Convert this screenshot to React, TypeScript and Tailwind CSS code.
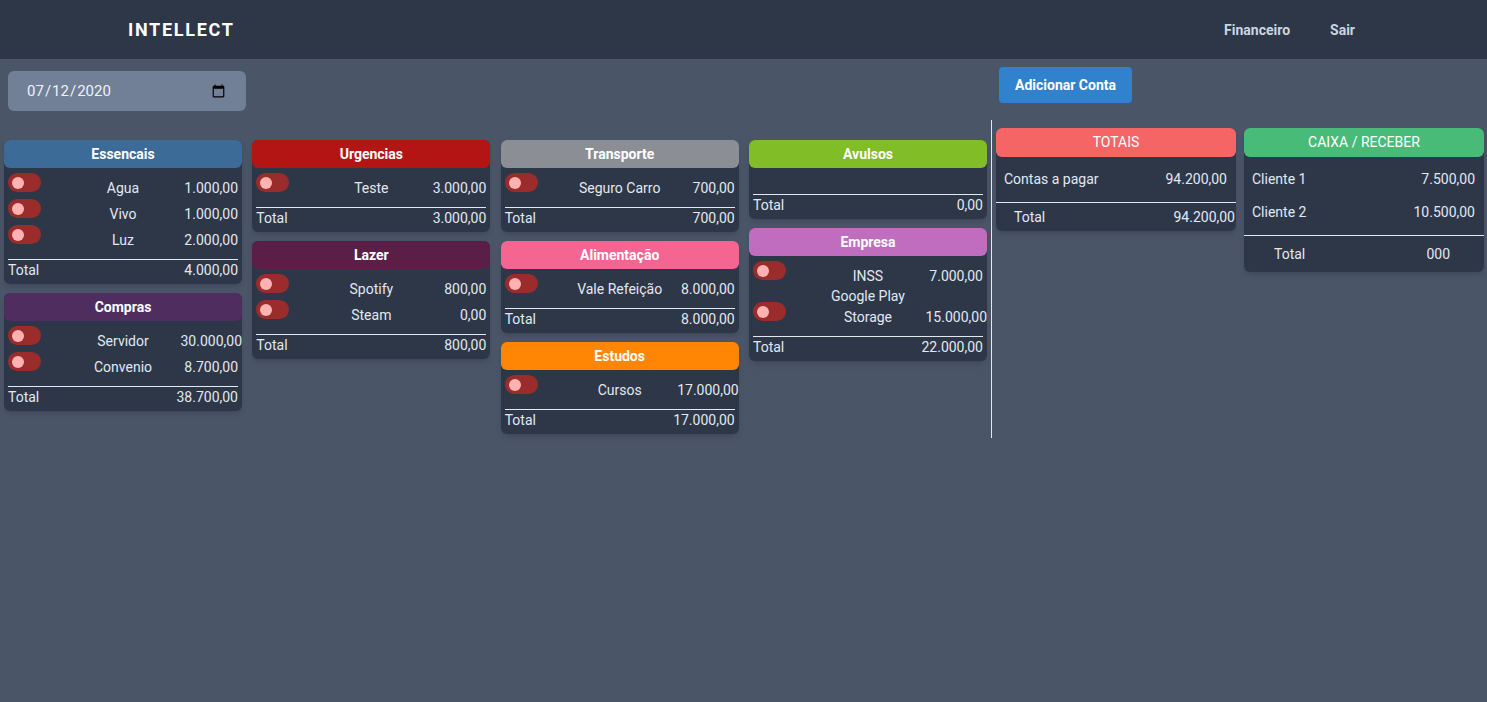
import React from 'react';

type Item = { name: string; value: string };
type Category = { title: string; headerClass: string; items: Item[]; total: string };

const columns: Category[][] = [
  [
    {
      title: 'Essencais',
      headerClass: 'bg-[#3b6b96]',
      items: [
        { name: 'Agua', value: '1.000,00' },
        { name: 'Vivo', value: '1.000,00' },
        { name: 'Luz', value: '2.000,00' },
      ],
      total: '4.000,00',
    },
    {
      title: 'Compras',
      headerClass: 'bg-[#4f2d5f]',
      items: [
        { name: 'Servidor', value: '30.000,00' },
        { name: 'Convenio', value: '8.700,00' },
      ],
      total: '38.700,00',
    },
  ],
  [
    {
      title: 'Urgencias',
      headerClass: 'bg-[#b31515]',
      items: [{ name: 'Teste', value: '3.000,00' }],
      total: '3.000,00',
    },
    {
      title: 'Lazer',
      headerClass: 'bg-[#5b1f47]',
      items: [
        { name: 'Spotify', value: '800,00' },
        { name: 'Steam', value: '0,00' },
      ],
      total: '800,00',
    },
  ],
  [
    {
      title: 'Transporte',
      headerClass: 'bg-[#8b8f95]',
      items: [{ name: 'Seguro Carro', value: '700,00' }],
      total: '700,00',
    },
    {
      title: 'Alimentação',
      headerClass: 'bg-[#f56592]',
      items: [{ name: 'Vale Refeição', value: '8.000,00' }],
      total: '8.000,00',
    },
    {
      title: 'Estudos',
      headerClass: 'bg-[#ff8605]',
      items: [{ name: 'Cursos', value: '17.000,00' }],
      total: '17.000,00',
    },
  ],
  [
    {
      title: 'Avulsos',
      headerClass: 'bg-[#80bd26]',
      items: [],
      total: '0,00',
    },
    {
      title: 'Empresa',
      headerClass: 'bg-[#c06cbf]',
      items: [
        { name: 'INSS', value: '7.000,00' },
        { name: 'Google Play Storage', value: '15.000,00' },
      ],
      total: '22.000,00',
    },
  ],
];

const Toggle: React.FC = () => (
  <span className="flex h-[19px] w-[33px] items-center rounded-full bg-[#9b2c2c] pl-1">
    <span className="h-3 w-3 rounded-full bg-[#feb2b2]" />
  </span>
);

const CategoryCard: React.FC<{ category: Category }> = ({ category }) => (
  <div className="rounded-md bg-[#2d3748] text-sm text-[#e2e8f0] shadow-md">
    <div
      className={`flex h-7 items-center justify-center rounded-md font-bold text-white ${category.headerClass}`}
    >
      {category.title}
    </div>
    <div className="px-1">
      <div className="min-h-[26px] pt-1 pb-[9px]">
        {category.items.map((item) => (
          <div
            key={item.name}
            className="grid grid-cols-[minmax(0,1fr)_minmax(0,2fr)_minmax(0,1fr)] items-end"
          >
            <div className="h-[26px] pt-px">
              <Toggle />
            </div>
            <div className="text-center leading-[20.5px]">{item.name}</div>
            <div className="whitespace-nowrap text-right leading-[20.5px]">{item.value}</div>
          </div>
        ))}
      </div>
      <div className="flex justify-between border-t border-[#e2e8f0] pb-[3px] leading-[21px]">
        <span>Total</span>
        <span>{category.total}</span>
      </div>
    </div>
  </div>
);

export default function App() {
  return (
    <div className="min-h-screen bg-[#4a5568] font-['Roboto',sans-serif]">
      {/* Header */}
      <header className="flex h-[59px] items-center justify-between bg-[#2d3748] pl-[128px] pr-[132px]">
        <span className="text-lg font-bold tracking-[1.7px] text-white">INTELLECT</span>
        <nav className="flex gap-10 text-sm font-bold text-[#cbd5e0]">
          <span>Financeiro</span>
          <span>Sair</span>
        </nav>
      </header>

      <div className="flex">
        {/* Contas */}
        <div className="w-[991px] pl-1 pt-3">
          <input
            type="date"
            defaultValue="2020-07-12"
            className="ml-1 h-10 w-[238px] rounded-md bg-[#718096] pl-[18px] pr-[18px] text-[15px] text-[#edf2f7] outline-none"
          />
          <div className="mt-[29px] grid grid-cols-[repeat(4,238px)] items-start gap-x-[10.33px]">
            {columns.map((col, i) => (
              <div key={i} className="flex flex-col gap-[9px]">
                {col.map((c) => (
                  <CategoryCard key={c.title} category={c} />
                ))}
              </div>
            ))}
          </div>
        </div>

        {/* Totais */}
        <div className="flex-1 pt-2">
          <button className="ml-2 h-9 rounded bg-[#3182ce] px-4 text-sm font-bold text-white">
            Adicionar Conta
          </button>
          <div className="mt-[17px] flex h-[318px] items-start gap-2 border-l border-[#e2e8f0] pl-1 pt-2 text-sm text-[#e2e8f0]">
            <div className="w-[240px] rounded-md bg-[#2d3748] shadow-md">
              <div className="flex h-[29px] items-center justify-center rounded-md bg-[#f56565] pb-px text-white">
                TOTAIS
              </div>
              <div className="pt-[5.5px] pb-[7px]">
                <div className="flex h-[32.7px] items-center justify-between pl-2 pr-[9px]">
                  <span>Contas a pagar</span>
                  <span>94.200,00</span>
                </div>
              </div>
              <div className="flex h-[29px] items-center justify-between border-t border-[#e2e8f0] pl-[18px] pr-px">
                <span>Total</span>
                <span>94.200,00</span>
              </div>
            </div>

            <div className="w-[240px] rounded-md bg-[#2d3748] shadow-md">
              <div className="flex h-[29px] items-center justify-center rounded-md bg-[#48bb78] pb-px text-white">
                CAIXA / RECEBER
              </div>
              <div className="pt-[5.5px] pb-[7px]">
                <div className="flex h-[32.7px] items-center justify-between pl-2 pr-[9px]">
                  <span>Cliente 1</span>
                  <span>7.500,00</span>
                </div>
                <div className="flex h-[32.7px] items-center justify-between pl-2 pr-[9px]">
                  <span>Cliente 2</span>
                  <span>10.500,00</span>
                </div>
              </div>
              <div className="flex h-[37px] items-center justify-between border-t border-[#e2e8f0] pl-[30px] pr-[34px]">
                <span>Total</span>
                <span>000</span>
              </div>
            </div>
          </div>
        </div>
      </div>
    </div>
  );
}
